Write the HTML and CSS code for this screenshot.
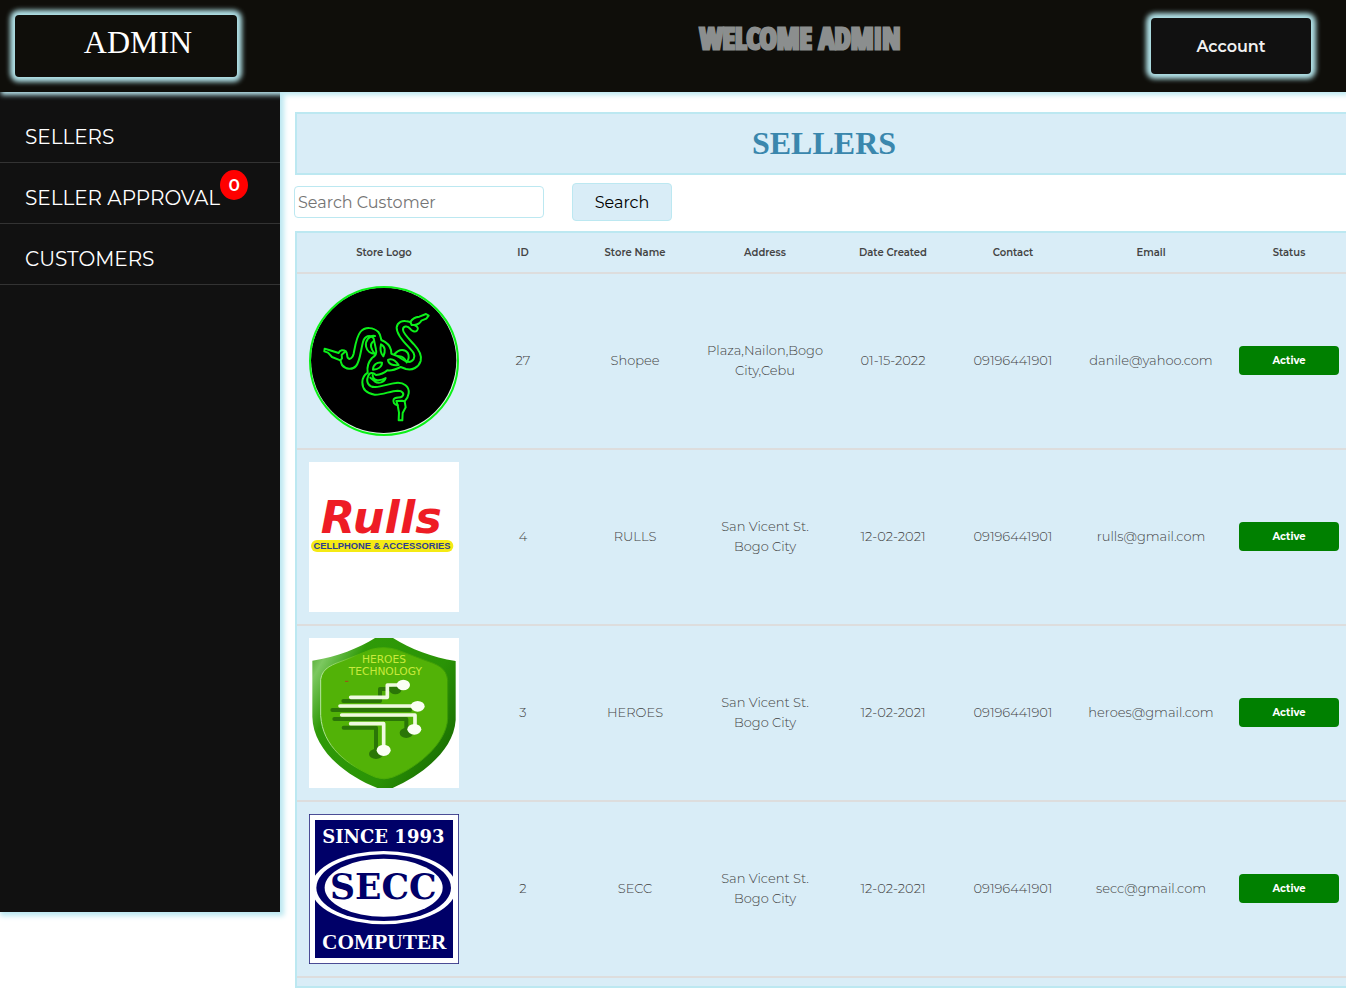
FILE: index.html
```html
<!DOCTYPE html>
<html lang="en">
<head>
<meta charset="utf-8">
<title>Admin - Sellers</title>
<link rel="stylesheet" href="styles.css">
</head>
<body>
<header class="topbar">
  <a class="brand" href="#">ADMIN</a>
  <p class="welcome">WELCOME ADMIN</p>
  <button class="account" type="button">Account</button>
</header>
<div class="layout">
  <nav class="sidebar">
    <ul class="menu">
      <li class="menu-item"><a class="menu-link" href="#">SELLERS</a></li>
      <li class="menu-item"><a class="menu-link" href="#">SELLER APPROVAL<span class="badge">0</span></a></li>
      <li class="menu-item"><a class="menu-link" href="#">CUSTOMERS</a></li>
    </ul>
  </nav>
  <main class="content">
    <h1 class="title">SELLERS</h1>
    <form class="search">
      <input class="search-input" type="text" placeholder="Search Customer" aria-label="Search Customer">
      <button class="search-button" type="button">Search</button>
    </form>
    <div class="panel">
      <table class="sellers">
        <colgroup>
          <col class="col-logo"><col class="col-id"><col class="col-name"><col class="col-address"><col class="col-date"><col class="col-contact"><col class="col-email"><col class="col-status">
        </colgroup>
        <thead>
          <tr><th>Store Logo</th><th>ID</th><th>Store Name</th><th>Address</th><th>Date Created</th><th>Contact</th><th>Email</th><th>Status</th></tr>
        </thead>
        <tbody>
          <tr>
            <td class="logo-cell">
              <svg class="logo" viewBox="27 30 450 450" role="img" aria-label="Shopee logo">
                <circle cx="252" cy="255" r="220" fill="#e4f4e8"/>
                <circle cx="251" cy="253" r="218" fill="#000"/>
                <circle cx="252" cy="255" r="222" fill="none" stroke="#0af016" stroke-width="6"/>
                <g fill="none" stroke="#0cf01a" stroke-width="6" stroke-linejoin="round" stroke-linecap="round">
                  <path d="M74 218L87 222L116 231C119 222 130 220 137 226C143 231 140 238 143 245C149 253 158 246 161 233C166 207 169 183 181 168C195 151 221 154 235 168C242 176 242 185 244 192C258 198 270 208 273 222L274 233C285 236 297 242 306 249C319 259 333 262 341 249C348 236 338 226 327 214C307 194 289 173 290 154C292 139 308 132 321 136L331 138C337 127 347 123 358 122L378 114L386 119L379 128L364 134C359 143 350 146 343 147C353 151 357 158 351 164C345 170 335 165 330 158C322 147 308 151 309 162C310 173 328 190 342 205C357 221 367 236 362 255C356 274 337 284 318 279L302 273C288 280 274 285 262 283C253 291 240 296 228 297C218 288 208 289 204 302C197 319 207 334 226 333C248 332 267 323 287 321C311 318 329 331 326 352C325 363 319 370 314 376L317 394L308 411L307 433H296L297 410L293 388C282 386 278 378 281 370C285 361 299 367 306 362C315 353 307 344 293 344C270 345 248 357 224 356C202 353 187 341 187 319C187 306 194 296 203 290C200 272 207 256 216 246C227 239 231 231 228 221L221 187C210 174 194 180 189 198C182 223 180 257 168 270C157 283 137 280 126 267L121 253L96 243L84 230L73 226Z"/>
                  <path d="M225 180C207 177 195 195 198 211C201 226 213 233 224 233C213 219 207 205 221 195"/>
                  <path d="M284 234C297 218 316 218 324 232C329 243 325 252 320 259C315 248 308 239 294 241"/>
                  <path d="M218 297C218 312 235 319 257 306C253 319 236 325 224 316L211 305"/>
                  <path d="M243 205C256 211 257 226 250 241C243 234 240 219 243 205Z"/>
                  <path d="M264 252C276 246 288 256 296 267C281 269 265 266 264 252Z"/>
                  <path d="M219 281C219 267 231 257 246 260C246 273 233 280 219 281Z"/>
                  <path d="M137 226L125 236L126 247L121 253M331 138L335 147L343 147M293 388L289 375L306 374L314 376"/>
                </g>
              </svg>
            </td>
            <td>27</td><td>Shopee</td><td>Plaza,Nailon,Bogo<br>City,Cebu</td><td>01-15-2022</td><td>09196441901</td><td>danile@yahoo.com</td>
            <td><button class="status" type="button">Active</button></td>
          </tr>
          <tr>
            <td class="logo-cell">
              <svg class="logo" viewBox="27 -84 450 450" role="img" aria-label="Rulls Cellphone and Accessories logo">
                <rect x="27" y="-84" width="450" height="450" fill="#fff"/>
                <text class="logo-script" x="244" y="130" text-anchor="middle">Rulls</text>
                <rect x="33" y="150" width="427" height="36" rx="18" fill="#f5ea14"/>
                <text class="logo-strip" x="246" y="178" text-anchor="middle">CELLPHONE &amp; ACCESSORIES</text>
              </svg>
            </td>
            <td>4</td><td>RULLS</td><td>San Vicent St.<br>Bogo City</td><td>12-02-2021</td><td>09196441901</td><td>rulls@gmail.com</td>
            <td><button class="status" type="button">Active</button></td>
          </tr>
          <tr>
            <td class="logo-cell">
              <svg class="logo" viewBox="27 24 450 450" role="img" aria-label="Heroes Technology logo">
                <defs>
                  <linearGradient id="rim" x1="0" y1="0" x2="1" y2="0.6">
                    <stop offset="0" stop-color="#3d9a18"/><stop offset="0.12" stop-color="#7cc860"/><stop offset="0.3" stop-color="#2f9a08"/><stop offset="0.75" stop-color="#2a9306"/><stop offset="1" stop-color="#1c7402"/>
                  </linearGradient>
                  <linearGradient id="edge" x1="0" y1="0" x2="1" y2="0">
                    <stop offset="0" stop-color="#b7e6a0"/><stop offset="0.3" stop-color="#52b207"/><stop offset="1" stop-color="#3b9806"/>
                  </linearGradient>
                </defs>
                <rect x="27" y="24" width="450" height="450" fill="#fff"/>
                <path d="M37 92C112 81 177 54 225 24H279C332 58 397 82 467 93V270C461 365 361 437 278 474H232C132 435 39 356 37 260Z" fill="url(#rim)"/>
                <path d="M62 148C67 112 100 103 132 91L215 58Q252 48 290 59L375 91C411 103 440 113 443 151V266C439 345 344 417 277 442Q252 451 227 442C141 405 68 350 62 257Z" fill="#52b207" stroke="url(#edge)" stroke-width="3"/>
                <g fill="none" stroke="#2b7607" stroke-width="12" stroke-linecap="round" stroke-linejoin="round">
                  <path d="M130 213H240V177H286M97 240H330M103 267H319V305M131 293H228V370"/>
                </g>
                <g fill="#2b7607"><ellipse cx="286" cy="180" rx="18" ry="13"/><ellipse cx="319" cy="309" rx="20" ry="15"/><ellipse cx="228" cy="372" rx="21" ry="15"/></g>
                <g fill="none" stroke="#effae0" stroke-width="11" stroke-linecap="round" stroke-linejoin="round">
                  <path d="M152 202H262V165H306M120 228H350M125 255H345V295M152 281H251V360"/>
                </g>
                <g fill="#fbfff4"><ellipse cx="310" cy="165" rx="20" ry="16"/><ellipse cx="353" cy="229" rx="21" ry="16"/><ellipse cx="343" cy="298" rx="21" ry="16"/><ellipse cx="251" cy="361" rx="21" ry="17"/></g>
                <path d="M135 154H145" stroke="#a5471a" stroke-width="3"/>
                <text class="logo-tech" x="252" y="98" text-anchor="middle">HEROES</text>
                <text class="logo-tech" x="256" y="136" text-anchor="middle">TECHNOLOGY</text>
              </svg>
            </td>
            <td>3</td><td>HEROES</td><td>San Vicent St.<br>Bogo City</td><td>12-02-2021</td><td>09196441901</td><td>heroes@gmail.com</td>
            <td><button class="status" type="button">Active</button></td>
          </tr>
          <tr>
            <td class="logo-cell">
              <svg class="logo" viewBox="27 27 450 450" role="img" aria-label="SECC Computer logo">
                <rect x="28" y="28" width="448" height="448" fill="#fff" stroke="#2c2c80" stroke-width="3"/>
                <rect x="45" y="45" width="414" height="414" fill="#000068"/>
                <clipPath id="field"><rect x="43" y="43" width="418" height="418"/></clipPath>
                <g clip-path="url(#field)">
                  <ellipse cx="251" cy="248" rx="218" ry="110" fill="#fff"/>
                  <ellipse cx="251" cy="248" rx="202" ry="100" fill="#000068"/>
                  <ellipse cx="251" cy="248" rx="177" ry="87" fill="#fff"/>
                </g>
                <text class="logo-since" x="250" y="113" text-anchor="middle">SINCE 1993</text>
                <text class="logo-secc" x="250" y="283" text-anchor="middle">SECC</text>
                <text class="logo-computer" x="253" y="431" text-anchor="middle">COMPUTER</text>
              </svg>
            </td>
            <td>2</td><td>SECC</td><td>San Vicent St.<br>Bogo City</td><td>12-02-2021</td><td>09196441901</td><td>secc@gmail.com</td>
            <td><button class="status" type="button">Active</button></td>
          </tr>
        </tbody>
      </table>
    </div>
  </main>
</div>
</body>
</html>
```
FILE: styles.css
```css
* { box-sizing: border-box; }

body {
  margin: 0;
  overflow-x: hidden;
  background: #fff;
  font-family: Montserrat, Inter, sans-serif;
}

button, input { font-family: inherit; }

/* Top bar */
.topbar {
  position: relative;
  z-index: 1;
  display: flex;
  justify-content: space-between;
  align-items: flex-start;
  height: 92px;
  padding: 15px 35px 0 15px;
  background: #0f0e0a;
  box-shadow: 2px 2px 5px 1px #bce8f1;
}

.brand {
  width: 222px;
  height: 62px;
  padding-left: 24px;
  border-radius: 4px;
  box-shadow: 0 0 5px 5px #b0e0e6;
  color: #fff;
  font: 32px/54px "Liberation Serif", serif;
  text-align: center;
  text-decoration: none;
}

.welcome {
  margin: 0 0 0 212px;
  color: #8b8e8e;
  font: bold 29px/46px Impact, "Liberation Sans Narrow", "Open Sans Condensed", "Roboto Condensed", sans-serif;
  -webkit-text-stroke: 3px #8b8e8e;
}

.account {
  width: 160px;
  height: 56px;
  margin-top: 3px;
  padding: 0;
  border: 0;
  border-radius: 4px;
  background: #111;
  box-shadow: 0 0 5px 5px #b0e0e6;
  color: #f1f1f1;
  font-size: 16px;
  font-weight: 600;
}

/* Sidebar */
.layout {
  display: flex;
  align-items: flex-start;
}

.sidebar {
  flex: 0 0 280px;
  min-height: calc(100vh - 188px);
  padding-top: 10px;
  background: #111;
  box-shadow: 2px 2px 5px 2px #bce8f1;
}

.menu {
  margin: 0;
  padding: 0;
  list-style: none;
}

.menu-item {
  padding: 20px 25px 10px;
  border-bottom: 1px solid #333;
  line-height: 30px;
}

.menu-link {
  position: relative;
  display: inline-block;
  color: #fff;
  font-size: 20px;
  text-decoration: none;
  vertical-align: top;
}

.badge {
  position: absolute;
  top: -13px;
  left: 100%;
  width: 28px;
  height: 30px;
  border-radius: 50%;
  background: red;
  color: #fff;
  font-size: 17px;
  font-weight: 600;
  text-align: center;
}

/* Main content runs slightly past the right edge of the window */
.content {
  flex: 1;
  margin-right: -7px;
  padding: 20px 0 20px 15px;
}

.title {
  margin: 0;
  border: 2px solid #bce8f1;
  background: #d9edf7;
  color: #3a87ad;
  font: bold 32px/59px "Liberation Serif", serif;
  text-align: center;
}

.search {
  display: flex;
  align-items: center;
  gap: 28px;
  margin: 8px 0 10px -1px;
}

.search-input {
  width: 250px;
  height: 32px;
  padding: 0 3px;
  border: 1px solid #bce8f1;
  border-radius: 4px;
  font-size: 16px;
  font-weight: 400;
}

.search-button {
  width: 100px;
  height: 38px;
  border: 1px solid #bce8f1;
  border-radius: 4px;
  background: #d9edf7;
  color: #000;
  font-size: 16px;
  font-weight: 400;
}

.panel {
  padding-bottom: 8px;
  border: 2px solid #bce8f1;
  background: #d9edf7;
}

.sellers {
  width: 100%;
  border-spacing: 0;
  table-layout: fixed;
  color: #444;
  text-align: center;
}

.col-logo { width: 174px; }
.col-id { width: 104px; }
.col-name { width: 120px; }
.col-address { width: 140px; }
.col-date { width: 116px; }
.col-contact { width: 124px; }
.col-email { width: 152px; }
.col-status { width: 124px; }

.sellers th {
  height: 41px;
  padding: 0;
  border-bottom: 2px solid #ddd;
  font-size: 10px;
  font-weight: 600;
}

.sellers td {
  padding: 11px 4px 13px;
  border-bottom: 2px solid #ddd;
  font-size: 13px;
  font-weight: 300;
  line-height: 20px;
}

.sellers .logo-cell { padding: 12px 4px; }

.logo {
  display: block;
  width: 150px;
  height: 150px;
  margin: 0 auto;
}

.status {
  width: 100px;
  height: 29px;
  padding: 0;
  border: 0;
  border-radius: 4px;
  background: green;
  color: #fff;
  font-size: 10px;
  font-weight: 700;
}

/* Lettering inside the store logos */
.logo-script {
  fill: #ee1c25;
  font: italic bold 134px "DejaVu Sans", sans-serif;
}

.logo-strip {
  fill: #2e3d8f;
  font: bold 28px "Liberation Sans Narrow", "Liberation Sans", sans-serif;
}

.logo-tech {
  fill: #c8ea3c;
  font: 32px "DejaVu Sans", sans-serif;
}

.logo-since {
  fill: #fff;
  font: bold 54px "DejaVu Serif", serif;
}

.logo-secc {
  fill: #000068;
  font: bold 104px "DejaVu Serif", serif;
}

.logo-computer {
  fill: #fff;
  font: bold 64px "Liberation Serif", serif;
}
```
